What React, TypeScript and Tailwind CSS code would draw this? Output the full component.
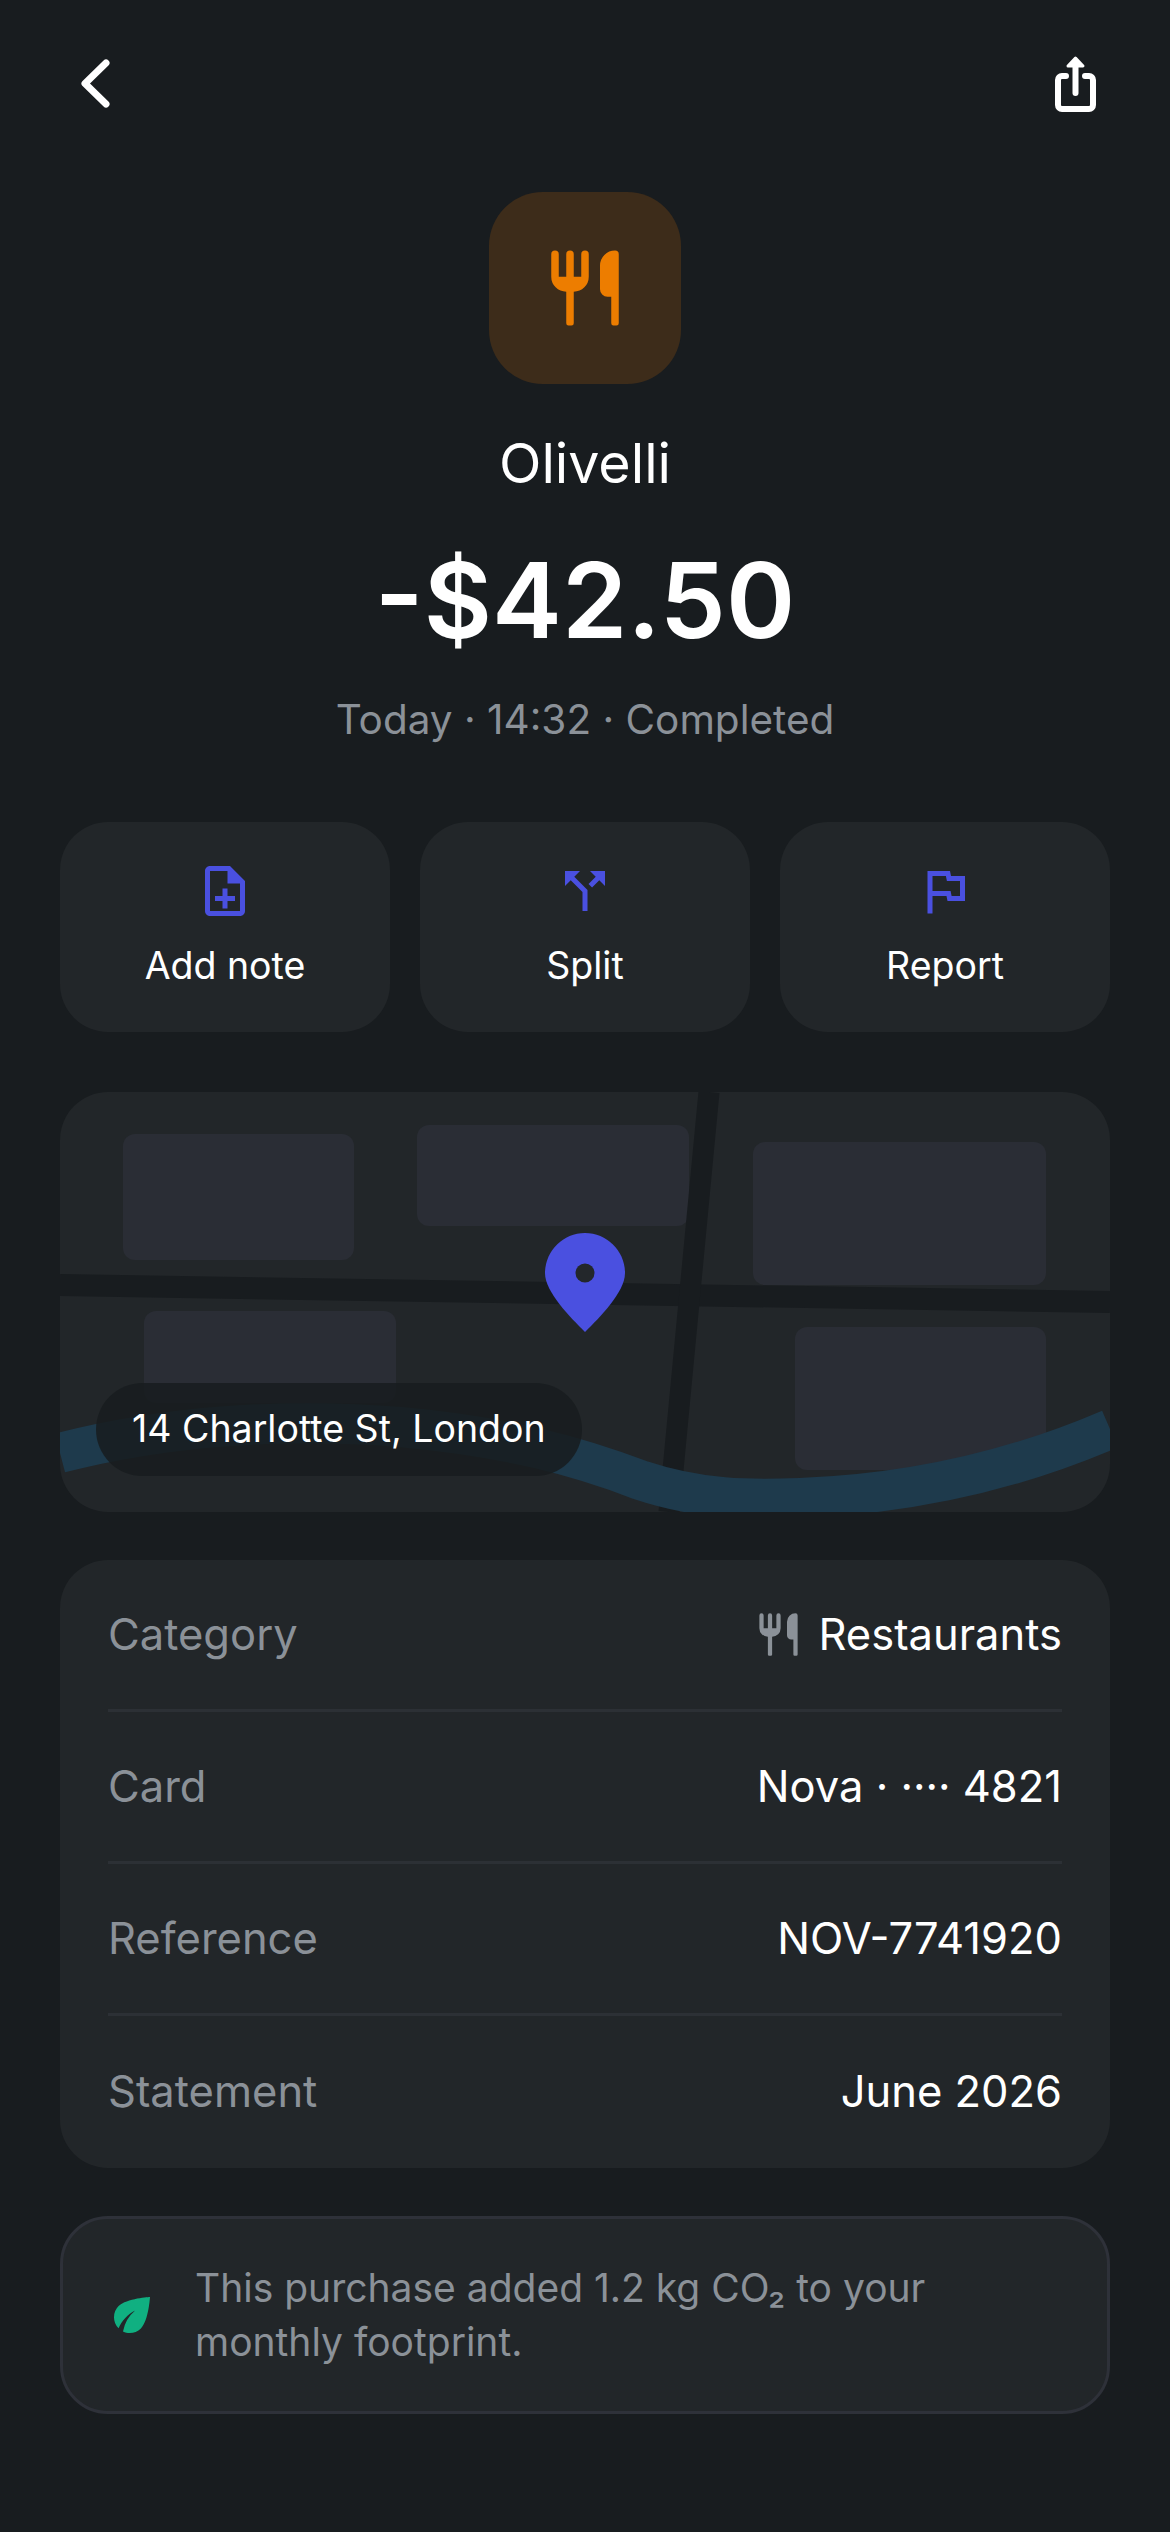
import { MdCallSplit, MdEco, MdOutlineFlag, MdOutlineNoteAdd } from "react-icons/md";

function Cutlery({ className }: { className: string }) {
    return (
        <svg viewBox="0 0 24 24" fill="currentColor" className={className}>
            <path d="M3 3a1 1 0 0 1 2 0v6h2V3a1 1 0 0 1 2 0v6h2V3a1 1 0 0 1 2 0v6a4 4 0 0 1-4 4v8.4a.6.6 0 0 1-.6.6H7.6a.6.6 0 0 1-.6-.6V13a4 4 0 0 1-4-4z" />
            <path d="M21 3v18.4a.6.6 0 0 1-.6.6h-.8a.6.6 0 0 1-.6-.6V14.300h-1a2 2 0 0 1-2-2V6a4 4 0 0 1 4-4 1 1 0 0 1 1 1z" />
        </svg>
    );
}

const actions = [
    { label: "Add note", icon: MdOutlineNoteAdd },
    { label: "Split", icon: MdCallSplit },
    { label: "Report", icon: MdOutlineFlag },
];

const rows = [
    { label: "Category", value: "Restaurants", cutlery: true },
    { label: "Card", value: "Nova · ···· 4821" },
    { label: "Reference", value: "NOV-7741920" },
    { label: "Statement", value: "June 2026" },
];

function MapArt() {
    return (
        <svg viewBox="0 0 1050 420" className="block w-full h-full">
            <rect x="63" y="42" width="231" height="126" rx="12" fill="#2a2d35" />
            <rect x="357" y="33" width="272" height="101" rx="12" fill="#2a2d35" />
            <rect x="693" y="50" width="293" height="143" rx="12" fill="#2a2d35" />
            <rect x="84" y="219" width="252" height="92" rx="12" fill="#2a2d35" />
            <rect x="735" y="235" width="251" height="143" rx="12" fill="#2a2d35" />
            <path d="M0 193L1050 210" stroke="#181c1f" strokeWidth="22" fill="none" />
            <path d="M649 0L609 420" stroke="#181c1f" strokeWidth="21" fill="none" />
            <path d="M0 361C100 335 220 325 340 335C450 345 520 365 580 388C640 408 690 408 740 406C850 402 950 380 1050 337" stroke="#1e3a4c" strokeWidth="40" fill="none" />
            <path d="M525 141C503 141 485 159 485 181C485 200 510 225 525 240C540 225 565 200 565 181C565 159 547 141 525 141Z" fill="#4a50e0" />
            <circle cx="525" cy="181" r="9.500" fill="#23272b" />
        </svg>
    );
}

export default function App() {
    return (
        <div className="w-[1170px] h-[2532px] bg-[#181c1f] px-[60px] font-[Inter,sans-serif] text-white overflow-hidden">
            <div className="flex justify-between items-center pt-[48px] h-[120px]">
                <svg viewBox="0 0 60 72" className="w-[60px] h-[72px] ml-[5px]">
                    <path d="M41 15L20 35.500L41 56" stroke="#fff" strokeWidth="7" strokeLinecap="round" strokeLinejoin="round" fill="none" />
                </svg>
                <svg viewBox="0 0 48 60" className="w-[48px] h-[60px] mr-[10px]">
                    <path d="M14 22H10a4 4 0 0 0-4 4v25a4 4 0 0 0 4 4h27a4 4 0 0 0 4-4V26a4 4 0 0 0-4-4h-4" stroke="#fff" strokeWidth="6" strokeLinecap="round" fill="none" />
                    <path d="M23.500 12V39" stroke="#fff" strokeWidth="6" strokeLinecap="round" fill="none" />
                    <path d="M23.500 4L31 12H16z" fill="#fff" stroke="#fff" strokeWidth="3" strokeLinejoin="round" />
                </svg>
            </div>

            <div className="flex flex-col items-center mt-[72px]">
                <div className="w-[192px] h-[192px] rounded-[54px] bg-[#3d2c1a] flex items-center justify-center text-[#ed7d00]">
                    <Cutlery className="w-[90px] h-[90px]" />
                </div>
                <div className="mt-[46px] text-[55.5px] leading-[66px] font-normal">Olivelli</div>
                <div className="mt-[41px] text-[105px] leading-[126px] font-semibold">-$42.50</div>
                <div className="mt-[33px] text-[40.5px] leading-[48px] text-[#8b9198]">Today · 14:32 · Completed</div>
            </div>

            <div className="grid grid-cols-3 gap-[30px] mt-[78px]">
                {actions.map((a) => (
                    <div key={a.label} className="h-[210px] rounded-[48px] bg-[#222629] flex flex-col items-center pt-[39px]">
                        <a.icon className="w-[60px] h-[60px] text-[#4a50e0]" />
                        <span className="mt-[21px] text-[37.5px] leading-[48px]">{a.label}</span>
                    </div>
                ))}
            </div>

            <div className="relative mt-[60px] h-[420px] rounded-[48px] bg-[#222629] overflow-hidden">
                <MapArt />
                <div className="absolute left-[36px] bottom-[36px] h-[93px] px-[36px] rounded-full bg-[#181c1f]/85 flex items-center text-[37.5px]">
                    14 Charlotte St, London
                </div>
            </div>

            <div className="mt-[48px] rounded-[48px] bg-[#222629] px-[48px]">
                {rows.map((r, i) => (
                    <div key={r.label} className={`h-[152px] flex justify-between items-center ${i < rows.length - 1 ? "border-b-[3px] border-[#2c3035]" : ""}`}>
                        <span className="text-[43.5px] text-[#8b9198]">{r.label}</span>
                        <span className="flex items-center gap-[14px] text-[43.5px]">
                            {r.cutlery && <Cutlery className="w-[51px] h-[51px] text-[#8b9198]" />}
                            {r.value}
                        </span>
                    </div>
                ))}
            </div>

            <div className="mt-[48px] rounded-[48px] border-[3px] border-[#2e3139] bg-[#222629] flex items-center gap-[36px] p-[42px]">
                <MdEco className="w-[54px] h-[54px] shrink-0 text-[#10b081]" />
                <p className="text-[39px] leading-[54px] text-[#8b9198]">This purchase added 1.2 kg CO₂ to your monthly footprint.</p>
            </div>
        </div>
    );
}
